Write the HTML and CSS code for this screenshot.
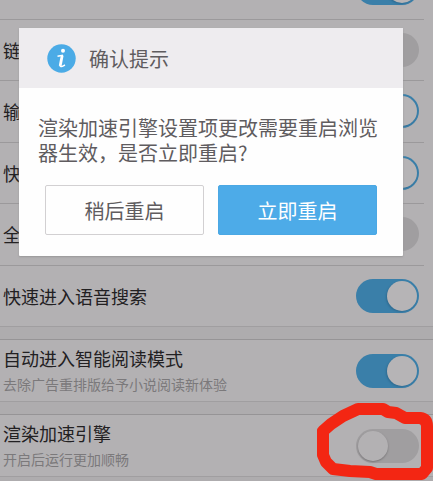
FILE: index.html
```
<!DOCTYPE html>
<html lang="zh-CN">
<head>
<meta charset="utf-8">
<meta name="viewport" content="width=device-width, initial-scale=1">
<title>确认提示</title>
<link rel="stylesheet" href="styles.css">
</head>

<body>
  <main class="settings">
    <section class="group group-main">
      <label class="row">
        <span class="name"></span>
        <input class="switch" type="checkbox" checked>
      </label>
      <label class="row">
        <span class="name">链</span>
        <input class="switch" type="checkbox">
      </label>
      <label class="row">
        <span class="name">输</span>
        <input class="switch" type="checkbox" checked>
      </label>
      <label class="row">
        <span class="name">快</span>
        <input class="switch" type="checkbox" checked>
      </label>
      <label class="row">
        <span class="name">全</span>
        <input class="switch" type="checkbox">
      </label>
      <label class="row">
        <span class="name">快速进入语音搜索</span>
        <input class="switch" type="checkbox" checked>
      </label>
    </section>

    <section class="group">
      <label class="row">
        <span class="name">自动进入智能阅读模式<small class="hint">去除广告重排版给予小说阅读新体验</small></span>
        <input class="switch" type="checkbox" checked>
      </label>
    </section>

    <section class="group">
      <label class="row">
        <span class="name">渲染加速引擎<small class="hint">开启后运行更加顺畅</small></span>
        <input class="switch" type="checkbox">
      </label>
      <svg class="marker" width="115" height="91" viewBox="0 0 115 91" aria-hidden="true">
        <path d="M5 41 L13 34 L25 26 L40 19 L65 19 L70 22 L78 23 L87 28 L102 28 Q109 29 109 36 L109 78 L104 84 L58 84 L52 82 L32 81 L15 79 L8 72 L5 65 Z"/>
      </svg>
    </section>
  </main>

  <div class="dialog" role="alertdialog" aria-labelledby="dialog-title" aria-describedby="dialog-text">
    <header class="dialog-header">
      <svg class="info" width="29" height="29" viewBox="0 0 29 29" aria-hidden="true">
        <circle cx="14.500" cy="14.500" r="14.200" fill="#4babe6"/>
        <circle cx="16" cy="6.800" r="2" fill="#fff"/>
        <path d="M10.500 12.300 L16 11.200 M12.800 21 Q13 23.200 15.300 22.300 L18 21" fill="none" stroke="#fff" stroke-width="1.400"/>
        <path d="M15.200 11.500 L13.200 21.800" fill="none" stroke="#fff" stroke-width="2.800"/>
      </svg>
      <h1 class="dialog-title" id="dialog-title">确认提示</h1>
    </header>
    <p class="dialog-text" id="dialog-text">渲染加速引擎设置项更改需要重启浏览器生效，是否立即重启?</p>
    <div class="dialog-buttons">
      <button class="btn" type="button">稍后重启</button>
      <button class="btn btn-primary" type="button">立即重启</button>
    </div>
  </div>
</body>

</html>
```
FILE: styles.css
```
* {
  box-sizing: border-box;
}
html {
  height: 100%;
}
body {
  margin: 0;
  height: 100%;
  overflow: hidden;
  background-color: #aeacae;
  font-family: "Noto Sans CJK SC", sans-serif;
}

/* settings list, dimmed behind the dialog */
.settings {
  display: flex;
  flex-direction: column;
  gap: 12px;
  /* scrolled part way through the first row */
  margin-top: -44px;
}
.group {
  position: relative;
  border-top: 1px solid #969496;
  border-bottom: 1px solid #a09ea0;
  background-color: #b3b1b3;
}
.group-main {
  display: grid;
  grid-auto-rows: 1fr;
  height: 371px;
}
.row {
  display: flex;
  align-items: center;
  justify-content: space-between;
  min-height: 61px;
  margin-right: 9px;
  padding: 0 5px 0 3px;
}
.row + .row {
  border-top: 1px solid #9b999b;
}
.name {
  color: #222022;
  font-size: 18px;
  line-height: 26px;
}
.hint {
  display: block;
  color: #7b797b;
  font-size: 14px;
  line-height: 26px;
}

.switch {
  appearance: none;
  display: flex;
  flex: none;
  width: 63px;
  height: 34px;
  margin: 0;
  padding: 2px;
  border-radius: 17px;
  background-color: #a09ea0;
}
.switch::before {
  content: "";
  width: 30px;
  height: 30px;
  border-radius: 50%;
  background-color: #b3b1b3;
  box-shadow: 0 1px 2px #777577;
}
.switch:checked {
  justify-content: flex-end;
  background-color: #3a7fa9;
}
.switch:checked::before {
  background-color: #b6b4b6;
  box-shadow: -1px 1px 2px #2f6c92;
}

.marker {
  position: absolute;
  right: 0;
  bottom: -5px;
  overflow: visible;
}
.marker path {
  fill: none;
  stroke: #f32613;
  stroke-width: 12;
  stroke-linejoin: round;
}

.dialog {
  position: absolute;
  top: 28px;
  left: 19px;
  right: 30px;
  border-radius: 1px;
  background-color: #fefefe;
  box-shadow: 0 1px 2px #999799;
  color: #5f5c5f;
  font-size: 20px;
}
.dialog-header {
  display: flex;
  align-items: center;
  gap: 13px;
  height: 60px;
  padding: 0 28px;
  background-color: #eeecef;
}
.dialog-title {
  margin: 0;
  font-size: 20px;
  font-weight: 400;
}
.dialog-text {
  margin: 0;
  padding: 27px 19px 20px;
  line-height: 25px;
}
.dialog-buttons {
  display: flex;
  gap: 14px;
  padding: 0 26px 21px;
}
.btn {
  flex: 1;
  height: 50px;
  padding: 0;
  border: 1px solid #d2d0d2;
  border-radius: 2px;
  background-color: #fefefe;
  color: #5f5c5f;
  font-family: inherit;
  font-size: 20px;
}
.btn-primary {
  border-color: #4ba8e4;
  background-color: #4dabe8;
  color: #fff;
}
```
